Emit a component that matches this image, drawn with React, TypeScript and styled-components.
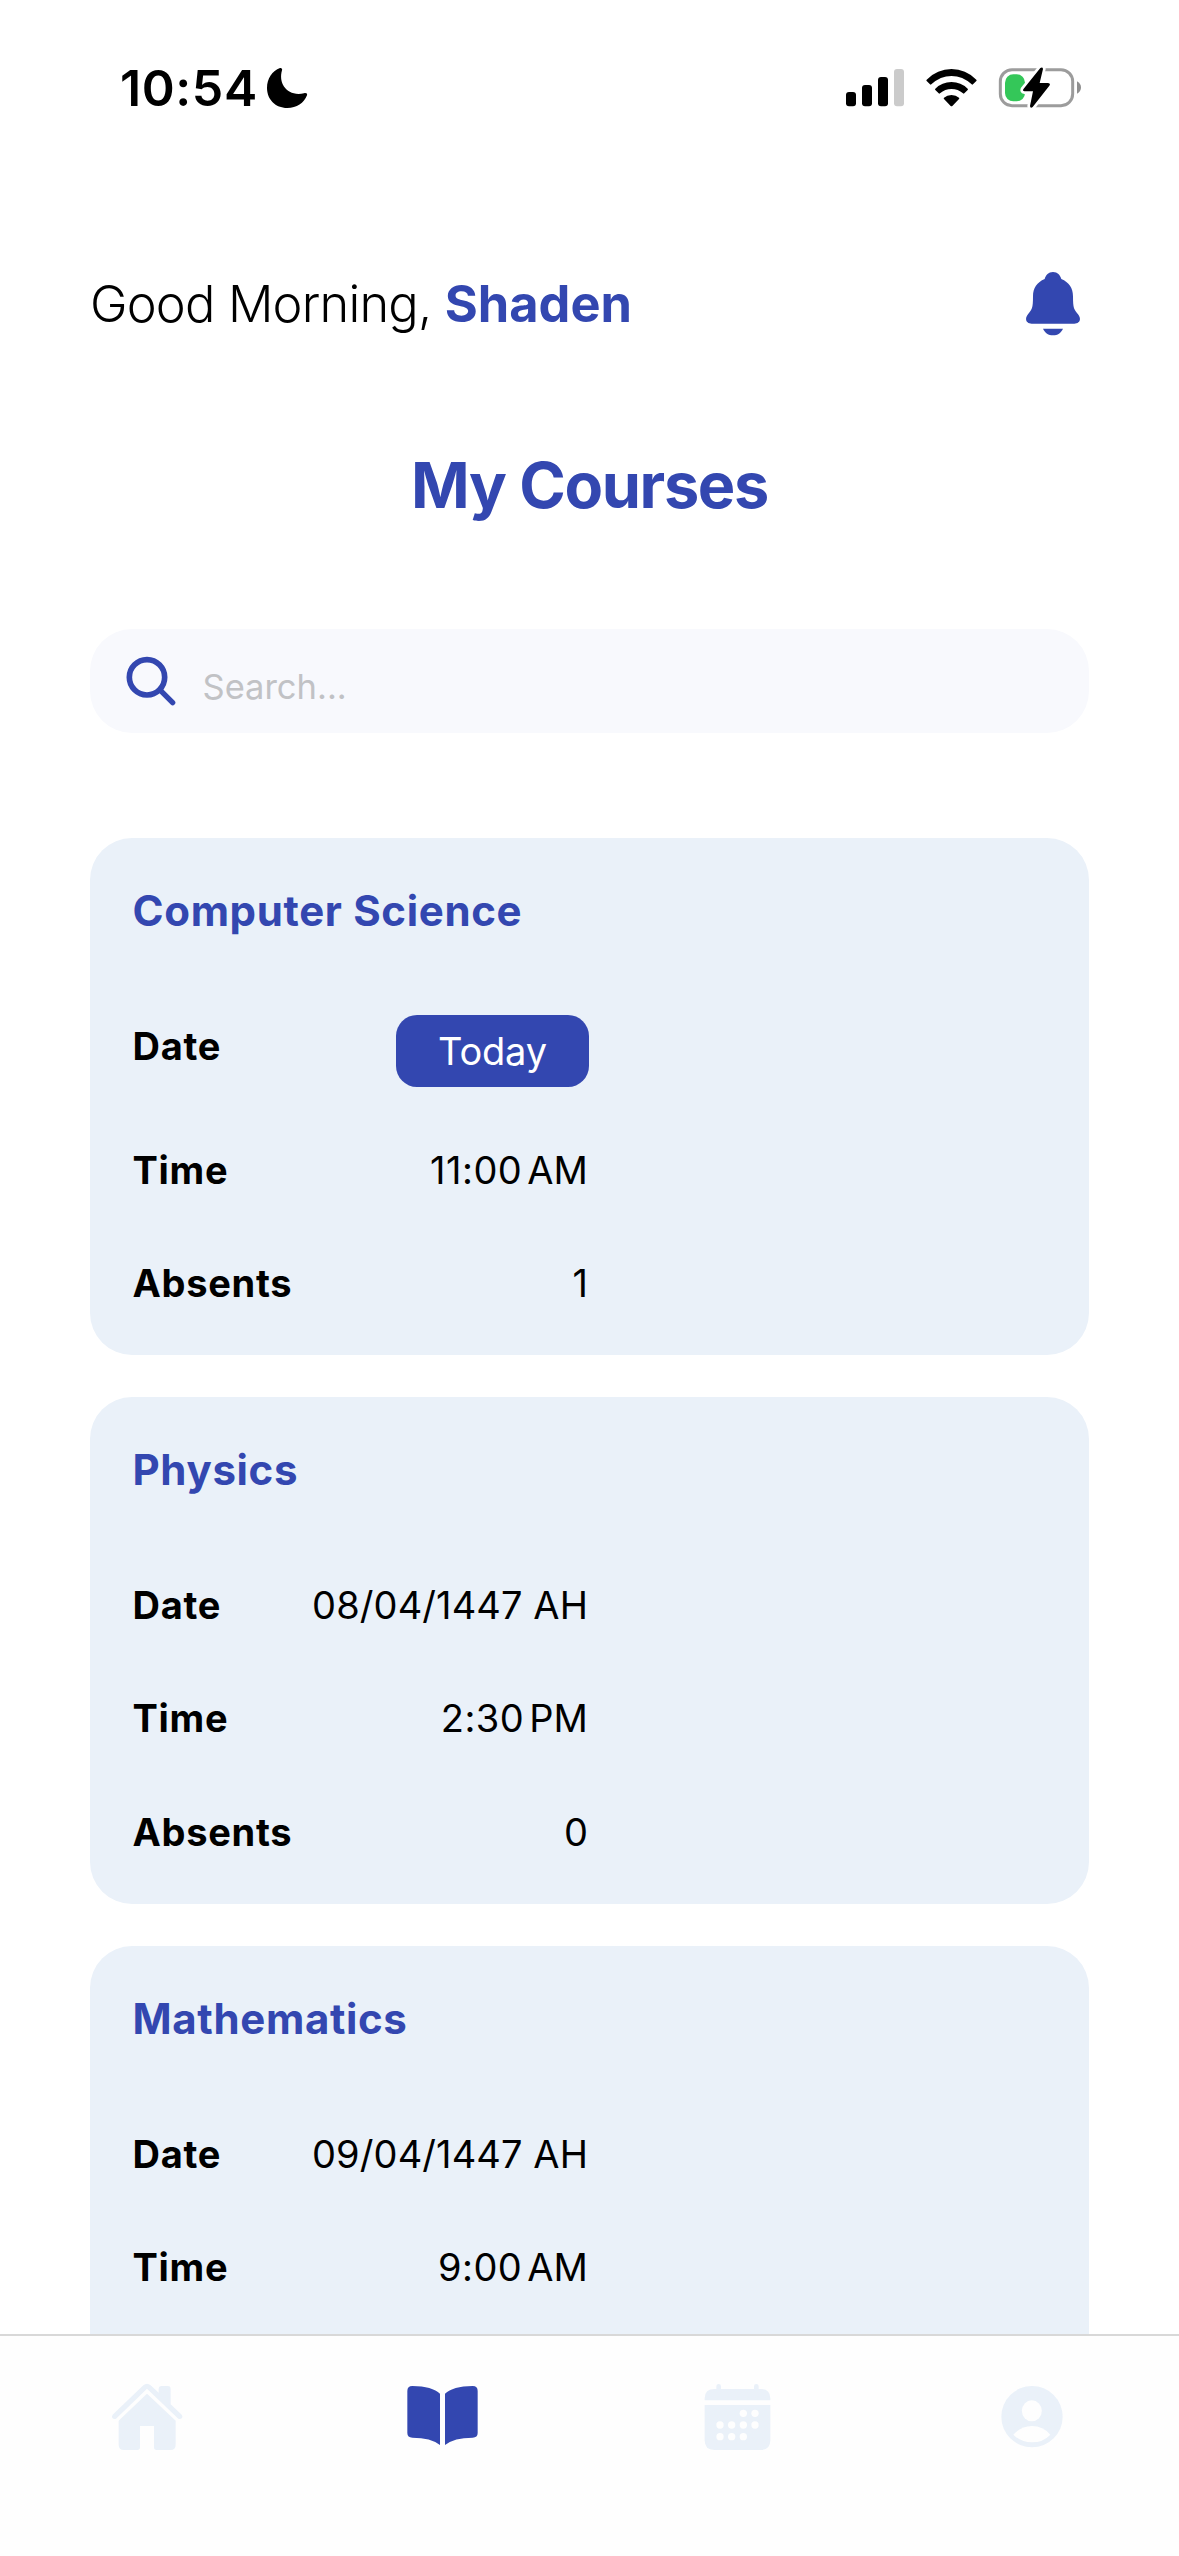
import React from "react";
import styled, { createGlobalStyle } from "styled-components";

const blue = "#3347b0";
const pale = "#eaf1f9";

const GlobalStyle = createGlobalStyle`
  * { box-sizing: border-box; }
  body { margin: 0; background: #fff; }
`;

const Screen = styled.div`
  width: 1179px;
  height: 2556px;
  display: flex;
  flex-direction: column;
  overflow: hidden;
  background: #fff;
  color: #000;
  font-family: Inter, "Liberation Sans", sans-serif;
`;

const StatusBar = styled.header`
  flex: none;
  height: 176px;
  padding: 0 97px 0 120px;
  display: flex;
  align-items: center;
  justify-content: space-between;
`;

const StatusGroup = styled.div<{ $gap: number }>`
  display: flex;
  align-items: center;
  gap: ${(p) => p.$gap}px;
`;

const Clock = styled.span`
  width: 138px;
  font-size: 50px;
  font-weight: 600;
  line-height: 60px;
  letter-spacing: 0.6px;
  white-space: nowrap;
`;

const Glyph = styled.svg`
  display: block;
  flex: none;
`;

const Content = styled.main`
  flex: 1;
  min-height: 0;
  overflow: hidden;
  padding: 92px 90px 0;
  display: flex;
  flex-direction: column;
`;

const Header = styled.div`
  flex: none;
  height: 72px;
  padding-right: 9px;
  display: flex;
  align-items: center;
  justify-content: space-between;
`;

const Greeting = styled.p`
  margin: 0;
  font-size: 50.5px;
  font-weight: 300;
  line-height: 72px;
  letter-spacing: -0.82px;
  white-space: nowrap;
`;

const UserName = styled.strong`
  font-weight: 700;
  letter-spacing: 0;
  color: ${blue};
`;

const PageTitle = styled.h1`
  flex: none;
  margin: 107px 0 0;
  font-size: 63px;
  font-weight: 700;
  line-height: 76px;
  letter-spacing: -1.35px;
  text-align: center;
  color: ${blue};
`;

const SearchBox = styled.div`
  flex: none;
  height: 104px;
  margin-top: 106px;
  padding-left: 35px;
  border-radius: 42px;
  background: #f8f9fd;
  display: flex;
  align-items: center;
  gap: 24.5px;
`;

const Placeholder = styled.span`
  padding-top: 11px;
  font-size: 34.5px;
  line-height: 44px;
  color: #c1c2c5;
`;

const CourseList = styled.div`
  flex: none;
  margin-top: 105px;
  display: flex;
  flex-direction: column;
  gap: 42px;
`;

const Card = styled.section`
  padding: 42px 42px 41.25px 42.5px;
  border-radius: 42px;
  background: ${pale};
`;

const CourseName = styled.h2`
  margin: 0 0 73px;
  font-size: 42px;
  font-weight: 700;
  line-height: 62px;
  letter-spacing: 0.65px;
  color: ${blue};
`;

const Details = styled.div`
  width: 456.5px;
  display: flex;
  flex-direction: column;
  gap: 51.25px;
`;

const DetailRow = styled.div`
  display: flex;
  align-items: flex-start;
  justify-content: space-between;
  font-size: 38px;
  line-height: 62px;
  white-space: nowrap;
`;

const Label = styled.span`
  font-weight: 700;
  letter-spacing: 0.7px;
`;

const Value = styled.span<{ $spacing?: number }>`
  padding-right: 1px;
  font-weight: 400;
  letter-spacing: ${(p) => p.$spacing ?? 0.1}px;
`;

const Meridiem = styled.span`
  margin-left: -2.5px;
  letter-spacing: 0.1px;
`;

const TodayBadge = styled.span`
  width: 193px;
  height: 72px;
  margin-bottom: 0.25px;
  border-radius: 21px;
  background: ${blue};
  color: #fff;
  font-weight: 400;
  line-height: 72px;
  text-align: center;
  letter-spacing: -0.2px;
`;

const TabBar = styled.nav`
  flex: none;
  height: 222px;
  padding-top: 45px;
  border-top: 2px solid #d8d8d8;
  background: #fefefe;
  display: grid;
  grid-template-columns: repeat(4, 1fr);
  justify-items: center;
  align-items: start;
`;

const MoonIcon = () => (
  <Glyph width="42" height="42" viewBox="558 81 126 126">
    <path d="M600 84c4-1 8 2 6 7c-12 40 16 80 66 69c6-2 11 1 9 6c-9 23-31 38-59 38c-36 0-61-26-61-60c0-28 16-52 39-60z" />
  </Glyph>
);

const SignalIcon = () => (
  <Glyph width="58" height="38" viewBox="78 86 174 114">
    <rect x="78" y="155" width="30" height="43" rx="9" />
    <rect x="126" y="134" width="30" height="64" rx="9" />
    <rect x="174" y="110" width="30" height="88" rx="9" />
    <rect x="222" y="86" width="30" height="112" rx="9" fill="#cbcbcb" />
  </Glyph>
);

const WifiIcon = () => (
  <Glyph width="51" height="38" viewBox="318 86 153 114">
    <path d="M320 118Q352 86 394.500 86Q437 86 469 118Q471 120 469 122L459 132Q457 134 455 132Q428 107 394.500 107Q361 107 334 132Q332 134 330 132L320 122Q318 120 320 118Z" />
    <path d="M346 145Q366 125 394.500 125Q423 125 443 145Q445 147 443 149L433 159Q431 161 429 159Q414 146 394.500 146Q375 146 360 159Q358 161 356 159L346 149Q344 147 346 145Z" />
    <path d="M372 172Q381 164 394.500 164Q408 164 417 172Q419 174 417 176L397 197Q394.500 199 392 197L372 176Q370 174 372 172Z" />
  </Glyph>
);

const BatteryIcon = () => (
  <Glyph width="84" height="42" viewBox="534 80 252 126">
    <rect x="541" y="88" width="217" height="108" rx="35" fill="none" stroke="#9c9c9c" strokeWidth="9" />
    <path d="M771 123Q783 130 783 141.500Q783 153 771 160Z" fill="#8f8f8f" />
    <rect x="555" y="102" width="60" height="81" rx="25" fill="#34c759" />
    <path
      d="M661 83Q668 79 669 86L659 128H684Q693 129 688 136L638 200Q631 206 630 197L639 153H614Q606 152 611 145Z"
      stroke="#fff"
      strokeWidth="16"
      strokeLinejoin="round"
      paintOrder="stroke"
    />
  </Glyph>
);

const BellIcon = () => (
  <Glyph width="54" height="66" viewBox="78 64 162 198" fill={blue}>
    <path d="M159 67C173 67 180 76 184 88C207 98 219 115 219 140C219 177 222 178 234 194C246 209 238 222 223 222H95C80 222 72 209 84 194C96 178 99 177 99 140C99 115 111 98 134 88C138 76 145 67 159 67Z" />
    <path d="M129 237H189C183 250 173 257 159 257C145 257 135 250 129 237Z" />
  </Glyph>
);

const SearchIcon = () => (
  <Glyph width="53" height="53" viewBox="165 136 159 159" fill="none" stroke={blue} strokeLinecap="round">
    <circle cx="231" cy="203" r="53" strokeWidth="17" />
    <path d="M272 243L308 279" strokeWidth="16" />
  </Glyph>
);

const HomeIcon = () => (
  <Glyph width="72" height="72" viewBox="94 183 216 216" fill={pale}>
    <path d="M191 196Q202 187 213 196L237 218V207Q237 198 246 198H264Q273 198 273 207V253L306 284Q310 289 307 294Q302 299 296 296L202 206L109 296Q103 299 98 294Q95 289 99 284Z" />
    <path d="M202 221L288 302V374Q288 390 272 390H231Q223 390 223 382V318H181V382Q181 390 173 390H133Q117 390 117 374V302Z" />
  </Glyph>
);

const BookIcon = () => (
  <Glyph width="72" height="72" viewBox="978 183 216 216" fill={blue}>
    <path d="M997 198Q1057 199 1080 221V375Q1053 353 997 353Q982 353 982 339V213Q982 198 997 198Z" />
    <path d="M1178 198Q1118 199 1095 221V375Q1122 353 1178 353Q1193 353 1193 339V213Q1193 198 1178 198Z" />
  </Glyph>
);

const calendarDays = [
  [250, 280], [285, 280],
  [180, 315], [215, 315], [250, 315], [285, 315],
  [180, 350], [215, 350], [250, 350],
];

const CalendarIcon = () => (
  <Glyph width="72" height="72" viewBox="123 183 216 216" fill={pale}>
    <path d="M134 241V235Q134 207 163 207H169V199Q169 192 176 192Q183 192 183 199V207H282V199Q282 192 289 192Q296 192 296 199V207H302Q331 207 331 235V241Z" />
    <path d="M134 255H331V361Q331 390 302 390H163Q134 390 134 361Z" />
    {calendarDays.map(([x, y]) => (
      <circle key={`${x}-${y}`} cx={x} cy={y} r="11" fill="#fefefe" />
    ))}
  </Glyph>
);

const ProfileIcon = () => (
  <Glyph width="72" height="72" viewBox="1007 183 216 216">
    <circle cx="1115" cy="290" r="92" fill={pale} />
    <ellipse cx="1114.500" cy="272.500" rx="30" ry="31.500" fill="#fefefe" />
    <path d="M1059 344Q1082 318 1115 318Q1148 318 1170 344Q1148 367 1115 367Q1082 367 1059 344Z" fill="#fefefe" />
  </Glyph>
);

type Course = {
  name: string;
  date: string;
  time: string;
  meridiem: string;
  absents: number;
};

const courses: Course[] = [
  { name: "Computer Science", date: "Today", time: "11:00", meridiem: "AM", absents: 1 },
  { name: "Physics", date: "08/04/1447 AH", time: "2:30", meridiem: "PM", absents: 0 },
  { name: "Mathematics", date: "09/04/1447 AH", time: "9:00", meridiem: "AM", absents: 0 },
];

const CourseCard = ({ name, date, time, meridiem, absents }: Course) => (
  <Card>
    <CourseName>{name}</CourseName>
    <Details>
      <DetailRow>
        <Label>Date</Label>
        {date === "Today" ? <TodayBadge>{date}</TodayBadge> : <Value>{date}</Value>}
      </DetailRow>
      <DetailRow>
        <Label>Time</Label>
        <Value $spacing={0.5}>
          {time}
          {"\u202f"}
          <Meridiem>{meridiem}</Meridiem>
        </Value>
      </DetailRow>
      <DetailRow>
        <Label>Absents</Label>
        <Value>{absents}</Value>
      </DetailRow>
    </Details>
  </Card>
);

export default function App() {
  return (
    <>
      <GlobalStyle />
      <Screen>
        <StatusBar>
          <StatusGroup $gap={8}>
            <Clock>10:54</Clock>
            <MoonIcon />
          </StatusGroup>
          <StatusGroup $gap={21.5}>
            <SignalIcon />
            <WifiIcon />
            <BatteryIcon />
          </StatusGroup>
        </StatusBar>
        <Content>
          <Header>
            <Greeting>
              Good Morning, <UserName>Shaden</UserName>
            </Greeting>
            <BellIcon />
          </Header>
          <PageTitle>My Courses</PageTitle>
          <SearchBox>
            <SearchIcon />
            <Placeholder>Search...</Placeholder>
          </SearchBox>
          <CourseList>
            {courses.map((course) => (
              <CourseCard key={course.name} {...course} />
            ))}
          </CourseList>
        </Content>
        <TabBar>
          <HomeIcon />
          <BookIcon />
          <CalendarIcon />
          <ProfileIcon />
        </TabBar>
      </Screen>
    </>
  );
}
